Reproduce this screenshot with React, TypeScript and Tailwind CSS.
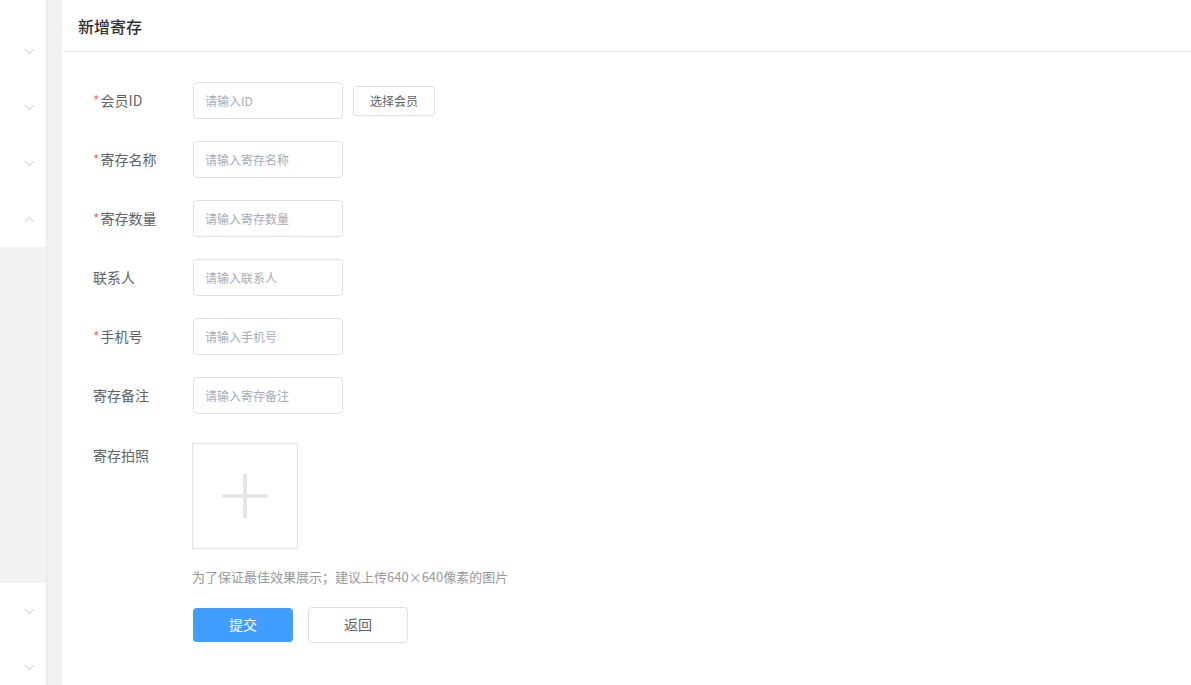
import { ChevronDown, ChevronUp } from 'lucide-react';

const font = { fontFamily: '"Noto Sans CJK SC", "Noto Sans", sans-serif' };

const fields = [
  { label: '会员ID', required: true, placeholder: '请输入ID', extra: true },
  { label: '寄存名称', required: true, placeholder: '请输入寄存名称' },
  { label: '寄存数量', required: true, placeholder: '请输入寄存数量' },
  { label: '联系人', required: false, placeholder: '请输入联系人' },
  { label: '手机号', required: true, placeholder: '请输入手机号' },
  { label: '寄存备注', required: false, placeholder: '请输入寄存备注' },
];

function Chevron({ up }: { up?: boolean }) {
  const Icon = up ? ChevronUp : ChevronDown;
  return (
    <div className="h-[56px] shrink-0 flex items-center justify-center pl-[13px]">
      <Icon size={15} strokeWidth={1.3} className="text-[#b4b4b4]" />
    </div>
  );
}

function Sidebar() {
  return (
    <div className="w-[47px] h-[685px] overflow-hidden flex flex-col bg-white border-r border-[#e6e6e6] shrink-0">
      <div className="h-[23px] shrink-0"></div>
      <Chevron />
      <Chevron />
      <Chevron />
      <Chevron up />
      <div className="h-[336px] shrink-0 bg-[#f2f2f2]"></div>
      <Chevron />
      <Chevron />
    </div>
  );
}

export default function App() {
  return (
    <div className="flex w-[1191px] h-[685px] overflow-hidden bg-[#f2f2f2]" style={font}>
      <Sidebar />
      <div className="flex-1 pl-[15px]">
        <div className="h-full bg-white">
          {/* ヘッダー */}
          <div className="h-[52px] border-b border-[#ebeef5] flex items-center pl-[16px]">
            <h1 className="text-[16px] text-[#303133] font-medium">新增寄存</h1>
          </div>

          {/* フォーム */}
          <div className="pt-[30px] pl-[31px] flex flex-col gap-[22px]">
            {fields.map(f => (
              <div key={f.label} className="flex items-center h-[37px]">
                <div className="w-[100px] text-[14px] text-[#606266]">
                  {f.required && <span className="text-[#f56c6c] mr-[1px]">*</span>}
                  {f.label}
                </div>
                <div className="w-[150px] h-[37px] border border-[#dcdfe6] rounded-[4px] flex items-center px-[11px]">
                  <span className="text-[12px] text-[#a8abb2]">{f.placeholder}</span>
                </div>
                {f.extra && (
                  <button className="ml-[10px] w-[82px] h-[30px] border border-[#dcdfe6] rounded-[3px] text-[12px] text-[#606266] bg-white">
                    选择会员
                  </button>
                )}
              </div>
            ))}

            <div className="flex mt-[7px]">
              <div className="w-[99px] text-[14px] text-[#606266] pt-[2px]">寄存拍照</div>
              <div>
                <div className="w-[106px] h-[106px] border border-[#e0e0e0] flex items-center justify-center">
                  <svg width="46" height="46" viewBox="0 0 46 46">
                    <path d="M23 2v42M2 23h42" stroke="#e6e6e6" strokeWidth="4" strokeLinecap="round" />
                  </svg>
                </div>
                <p className="text-[13px] text-[#999] mt-[18px]">为了保证最佳效果展示；建议上传640×640像素的图片</p>
                <div className="flex gap-[15px] mt-[20px] items-center">
                  <button className="w-[100px] h-[34px] bg-[#409eff] rounded-[4px] text-white text-[14px] ml-[1px]">提交</button>
                  <button className="w-[100px] h-[36px] bg-white border border-[#dcdfe6] rounded-[4px] text-[#606266] text-[14px]">返回</button>
                </div>
              </div>
            </div>
          </div>
        </div>
      </div>
    </div>
  );
}
